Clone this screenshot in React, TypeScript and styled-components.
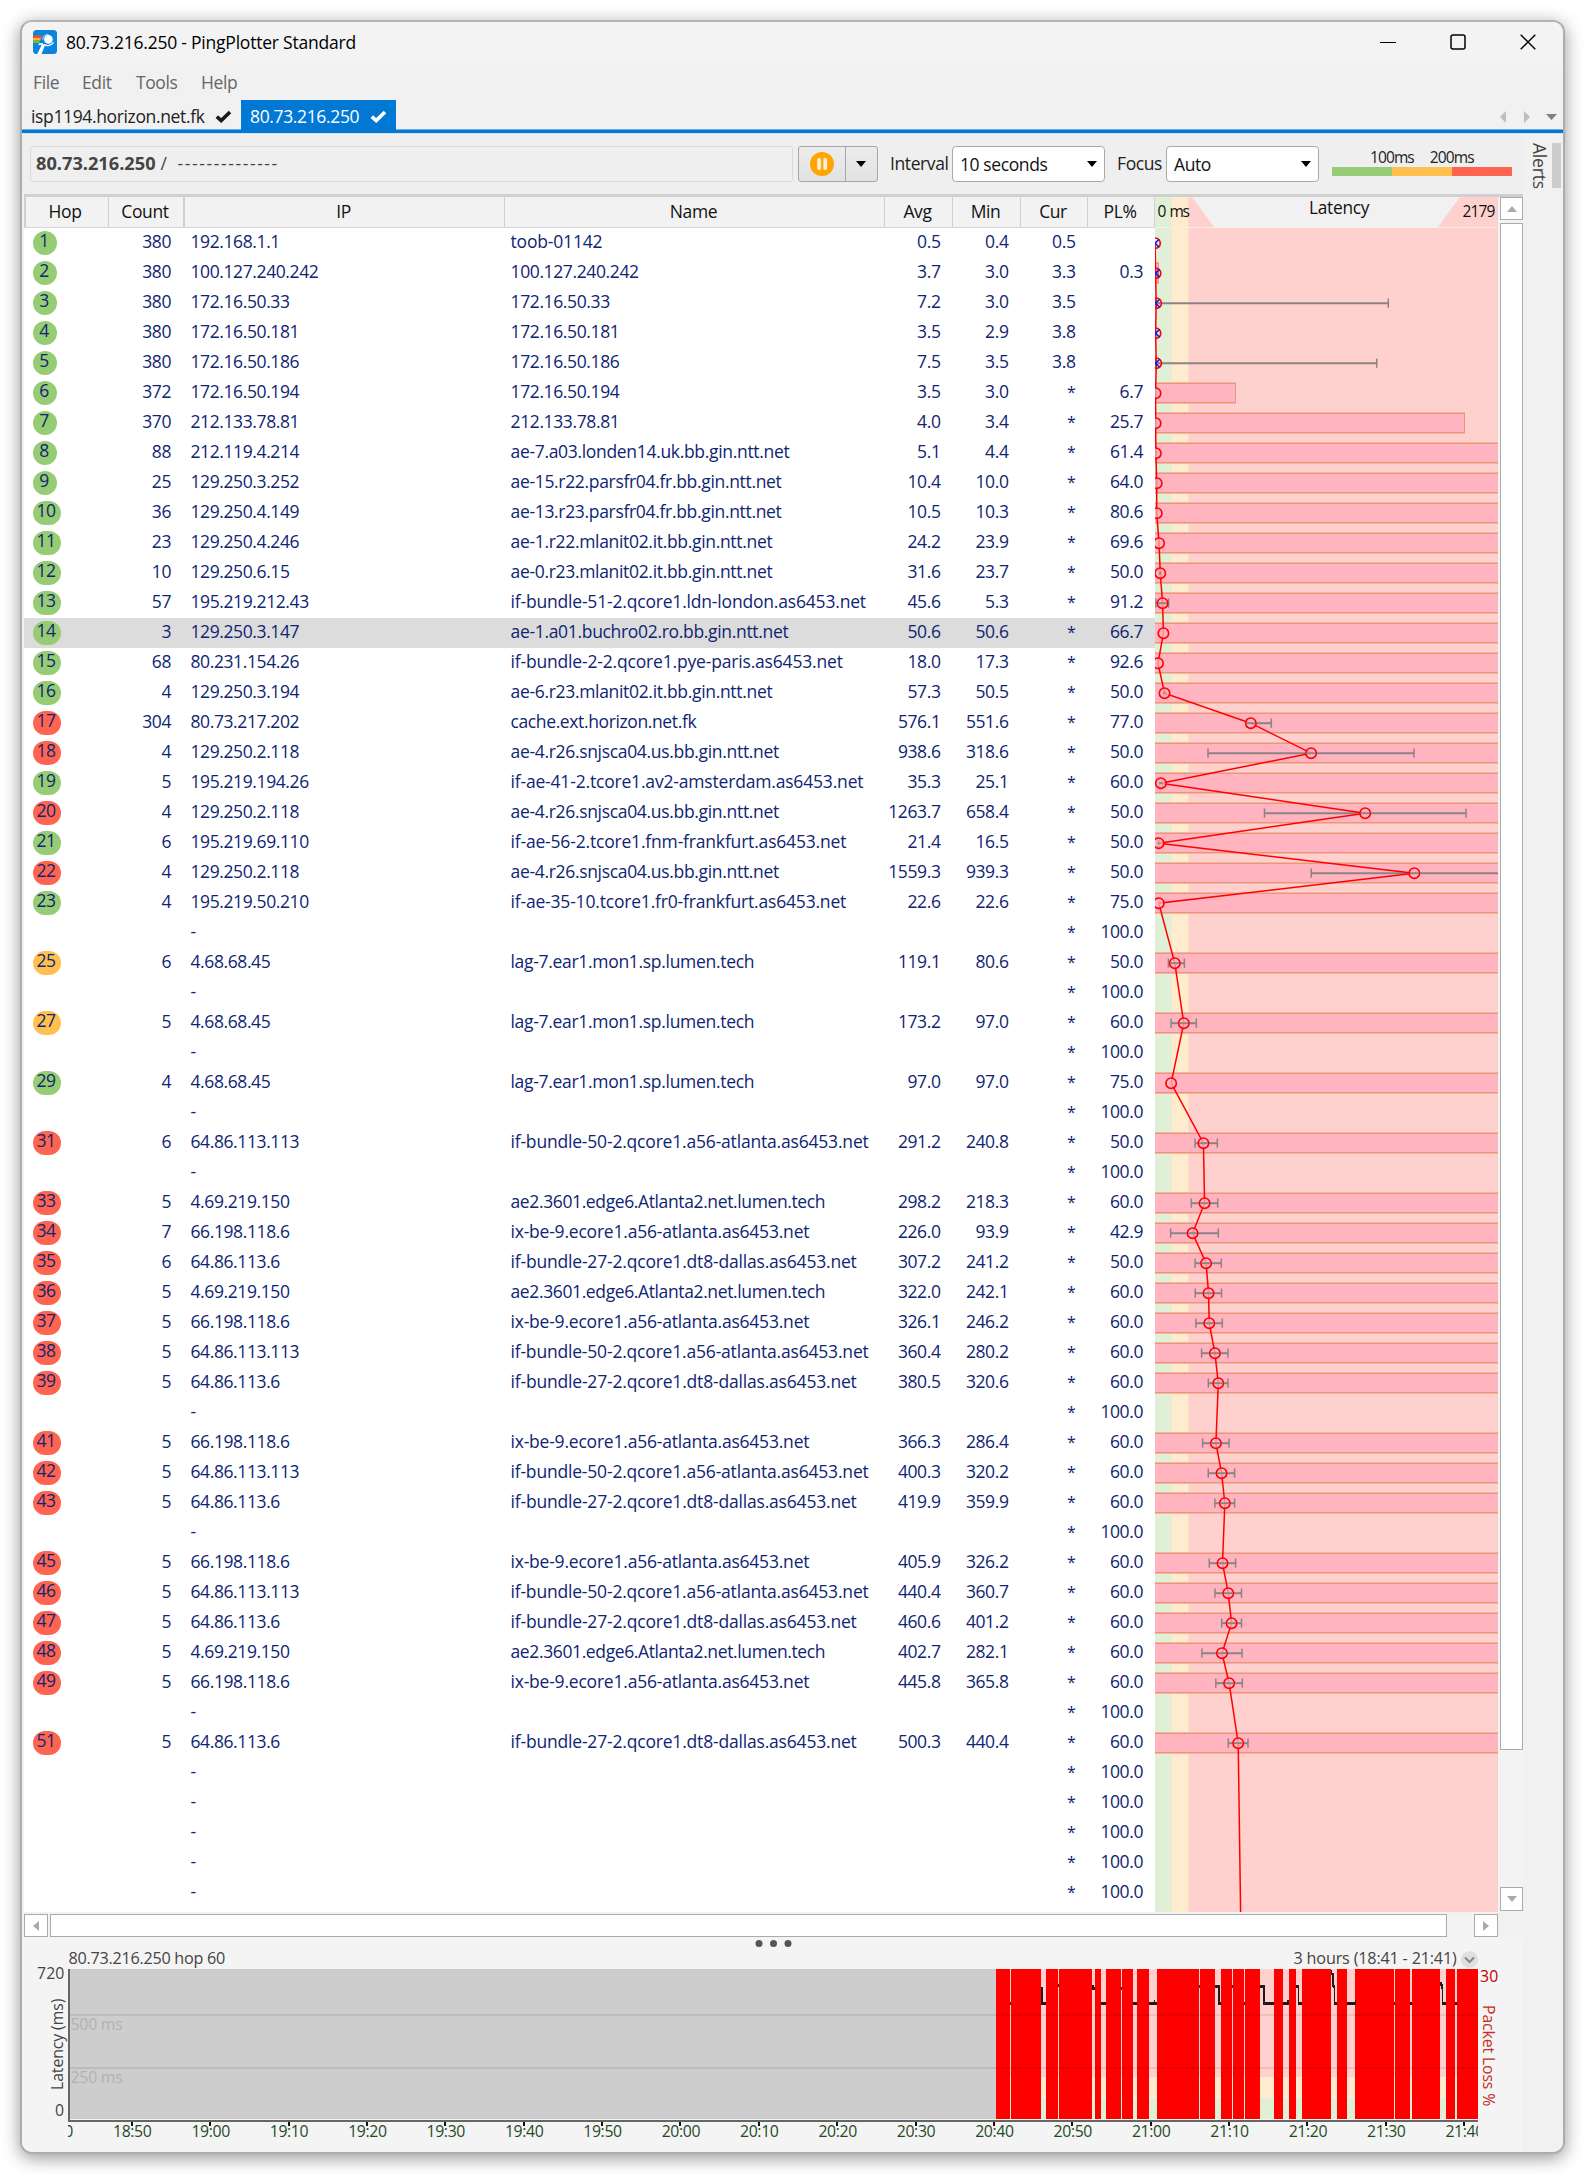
import React from "react";
import styled, { createGlobalStyle, css } from "styled-components";

const GlobalStyle = createGlobalStyle`
  * { box-sizing: border-box; }
  html, body { margin: 0; padding: 0; background: #fff; }
  body {
    font-family: "Open Sans", "Noto Sans", sans-serif;
    font-size: 17.5px;
    letter-spacing: -0.4px;
    color: #111;
  }
`;

/* ---------- data ---------- */

type Hop = {
  hop: number;
  count?: number;
  ip?: string;
  name?: string;
  avg?: number;
  min?: number;
  cur?: string;
  pl?: number;
  /** right end of the min/max whisker, in chart pixels */
  maxX?: number;
};

const h = (
  hop: number, count: number, ip: string, name: string,
  avg: number, min: number, cur: string, pl?: number, maxX?: number,
): Hop => ({ hop, count, ip, name, avg, min, cur, pl, maxX });

const known: Hop[] = [
  h(1, 380, "192.168.1.1", "toob-01142", 0.5, 0.4, "0.5"),
  h(2, 380, "100.127.240.242", "100.127.240.242", 3.7, 3.0, "3.3", 0.3, 3),
  h(3, 380, "172.16.50.33", "172.16.50.33", 7.2, 3.0, "3.5", undefined, 233.3),
  h(4, 380, "172.16.50.181", "172.16.50.181", 3.5, 2.9, "3.8"),
  h(5, 380, "172.16.50.186", "172.16.50.186", 7.5, 3.5, "3.8", undefined, 221.7),
  h(6, 372, "172.16.50.194", "172.16.50.194", 3.5, 3.0, "*", 6.7, 1),
  h(7, 370, "212.133.78.81", "212.133.78.81", 4.0, 3.4, "*", 25.7, 1),
  h(8, 88, "212.119.4.214", "ae-7.a03.londen14.uk.bb.gin.ntt.net", 5.1, 4.4, "*", 61.4, 1.3),
  h(9, 25, "129.250.3.252", "ae-15.r22.parsfr04.fr.bb.gin.ntt.net", 10.4, 10.0, "*", 64.0, 2),
  h(10, 36, "129.250.4.149", "ae-13.r23.parsfr04.fr.bb.gin.ntt.net", 10.5, 10.3, "*", 80.6, 2),
  h(11, 23, "129.250.4.246", "ae-1.r22.mlanit02.it.bb.gin.ntt.net", 24.2, 23.9, "*", 69.6, 4.2),
  h(12, 10, "129.250.6.15", "ae-0.r23.mlanit02.it.bb.gin.ntt.net", 31.6, 23.7, "*", 50.0, 6.2),
  h(13, 57, "195.219.212.43", "if-bundle-51-2.qcore1.ldn-london.as6453.net", 45.6, 5.3, "*", 91.2, 13.6),
  h(14, 3, "129.250.3.147", "ae-1.a01.buchro02.ro.bb.gin.ntt.net", 50.6, 50.6, "*", 66.7),
  h(15, 68, "80.231.154.26", "if-bundle-2-2.qcore1.pye-paris.as6453.net", 18.0, 17.3, "*", 92.6, 3),
  h(16, 4, "129.250.3.194", "ae-6.r23.mlanit02.it.bb.gin.ntt.net", 57.3, 50.5, "*", 50.0, 10.5),
  h(17, 304, "80.73.217.202", "cache.ext.horizon.net.fk", 576.1, 551.6, "*", 77.0, 116.3),
  h(18, 4, "129.250.2.118", "ae-4.r26.snjsca04.us.bb.gin.ntt.net", 938.6, 318.6, "*", 50.0, 259),
  h(19, 5, "195.219.194.26", "if-ae-41-2.tcore1.av2-amsterdam.as6453.net", 35.3, 25.1, "*", 60.0, 7.3),
  h(20, 4, "129.250.2.118", "ae-4.r26.snjsca04.us.bb.gin.ntt.net", 1263.7, 658.4, "*", 50.0, 311),
  h(21, 6, "195.219.69.110", "if-ae-56-2.tcore1.fnm-frankfurt.as6453.net", 21.4, 16.5, "*", 50.0, 4.4),
  h(22, 4, "129.250.2.118", "ae-4.r26.snjsca04.us.bb.gin.ntt.net", 1559.3, 939.3, "*", 50.0, 362),
  h(23, 4, "195.219.50.210", "if-ae-35-10.tcore1.fr0-frankfurt.as6453.net", 22.6, 22.6, "*", 75.0),
  h(25, 6, "4.68.68.45", "lag-7.ear1.mon1.sp.lumen.tech", 119.1, 80.6, "*", 50.0, 29.4),
  h(27, 5, "4.68.68.45", "lag-7.ear1.mon1.sp.lumen.tech", 173.2, 97.0, "*", 60.0, 41.3),
  h(29, 4, "4.68.68.45", "lag-7.ear1.mon1.sp.lumen.tech", 97.0, 97.0, "*", 75.0),
  h(31, 6, "64.86.113.113", "if-bundle-50-2.qcore1.a56-atlanta.as6453.net", 291.2, 240.8, "*", 50.0, 62.3),
  h(33, 5, "4.69.219.150", "ae2.3601.edge6.Atlanta2.net.lumen.tech", 298.2, 218.3, "*", 60.0, 62.7),
  h(34, 7, "66.198.118.6", "ix-be-9.ecore1.a56-atlanta.as6453.net", 226.0, 93.9, "*", 42.9, 63.3),
  h(35, 6, "64.86.113.6", "if-bundle-27-2.qcore1.dt8-dallas.as6453.net", 307.2, 241.2, "*", 50.0, 66.3),
  h(36, 5, "4.69.219.150", "ae2.3601.edge6.Atlanta2.net.lumen.tech", 322.0, 242.1, "*", 60.0, 66.5),
  h(37, 5, "66.198.118.6", "ix-be-9.ecore1.a56-atlanta.as6453.net", 326.1, 246.2, "*", 60.0, 67.3),
  h(38, 5, "64.86.113.113", "if-bundle-50-2.qcore1.a56-atlanta.as6453.net", 360.4, 280.2, "*", 60.0, 73),
  h(39, 5, "64.86.113.6", "if-bundle-27-2.qcore1.dt8-dallas.as6453.net", 380.5, 320.6, "*", 60.0, 73),
  h(41, 5, "66.198.118.6", "ix-be-9.ecore1.a56-atlanta.as6453.net", 366.3, 286.4, "*", 60.0, 74),
  h(42, 5, "64.86.113.113", "if-bundle-50-2.qcore1.a56-atlanta.as6453.net", 400.3, 320.2, "*", 60.0, 79.6),
  h(43, 5, "64.86.113.6", "if-bundle-27-2.qcore1.dt8-dallas.as6453.net", 419.9, 359.9, "*", 60.0, 79.6),
  h(45, 5, "66.198.118.6", "ix-be-9.ecore1.a56-atlanta.as6453.net", 405.9, 326.2, "*", 60.0, 80.6),
  h(46, 5, "64.86.113.113", "if-bundle-50-2.qcore1.a56-atlanta.as6453.net", 440.4, 360.7, "*", 60.0, 86.5),
  h(47, 5, "64.86.113.6", "if-bundle-27-2.qcore1.dt8-dallas.as6453.net", 460.6, 401.2, "*", 60.0, 86.5),
  h(48, 5, "4.69.219.150", "ae2.3601.edge6.Atlanta2.net.lumen.tech", 402.7, 282.1, "*", 60.0, 87),
  h(49, 5, "66.198.118.6", "ix-be-9.ecore1.a56-atlanta.as6453.net", 445.8, 365.8, "*", 60.0, 87.3),
  h(51, 5, "64.86.113.6", "if-bundle-27-2.qcore1.dt8-dallas.as6453.net", 500.3, 440.4, "*", 60.0, 93),
];

const ROW_COUNT = 56;
const rows: Hop[] = Array.from({ length: ROW_COUNT }, (_, i) =>
  known.find((k) => k.hop === i + 1) ?? { hop: i + 1, ip: "-", cur: "*", pl: 100 },
);

const SELECTED_HOP = 14;

const badgeColor = (avg: number) =>
  avg < 100 ? "#96cc73" : avg < 200 ? "#ffc04f" : "#ff6450";

/* hyphenated host names are tracked a little wider */
const nameTracking = (name = "") => {
  const hyphens = name.split("-").length - 1;
  return -0.38 + (hyphens * 2.1) / Math.max(name.length, 1);
};

/* ---------- window frame ---------- */

const Page = styled.div`
  width: 1585px;
  height: 2175px;
  padding: 20px;
  overflow: hidden;
`;

const Window = styled.div`
  width: 1545px;
  height: 2134px;
  border: 2px solid #acacac;
  border-top-color: #b4b4b4;
  border-radius: 12px;
  background: #f1f1f1;
  box-shadow: 0 4px 18px rgba(0, 0, 0, 0.42);
  overflow: hidden;
  display: flex;
  flex-direction: column;
`;

const TitleBar = styled.header`
  height: 43px;
  flex: none;
  background: #f3f3f3;
  display: flex;
  align-items: center;
  padding: 0 27px 3px 11px;
`;

const Title = styled.h1`
  margin: 0 auto 0 9px;
  font-size: 17.5px;
  font-weight: 400;
  letter-spacing: -0.22px;
  color: #000;
`;

const WindowButtons = styled.div`
  display: flex;
  gap: 54px;
`;

const MenuBar = styled.nav`
  height: 35px;
  flex: none;
  display: flex;
  align-items: center;
  padding: 0 0 1px 11px;
  color: #666;
`;

const MenuItem = styled.span<{ $w: number }>`
  width: ${(p) => p.$w}px;
`;

const TabStrip = styled.div`
  height: 34px;
  flex: none;
  display: flex;
  align-items: stretch;
  border-bottom: 1px solid #d5e2ee;
  box-shadow: inset 0 -3px 0 #0078d4, inset 0 -4px 0 #66aee5;
`;

const Tab = styled.div<{ $active?: boolean }>`
  display: flex;
  align-items: center;
  justify-content: space-between;
  width: ${(p) => (p.$active ? 155 : 219)}px;
  padding: 0 9px 1px 9px;
  ${(p) =>
    p.$active
      ? css`
          background: #0078d4;
          color: #fff;
        `
      : css`
          color: #222;
        `}
`;

const TabText = styled.span`
  letter-spacing: -0.36px;
`;

const TabArrows = styled.div`
  margin-left: auto;
  padding-right: 6px;
  display: flex;
  align-items: center;
`;

const Body = styled.div`
  flex: 1;
  display: flex;
  min-height: 0;
`;

const Main = styled.div`
  width: 1501px;
  display: flex;
  flex-direction: column;
`;

const SideStrip = styled.aside`
  flex: 1;
  background: #f1f1f1;
  padding: 9px 2px 0 6px;
  display: flex;
  justify-content: space-between;
  align-items: flex-start;
`;

const SideLabel = styled.span`
  writing-mode: vertical-rl;
  line-height: 22px;
  height: 46px;
  letter-spacing: -0.2px;
  color: #444;
`;

const SideHandle = styled.span`
  width: 9px;
  height: 45px;
  background: #cdcdcd;
`;

/* ---------- toolbar ---------- */

const Toolbar = styled.div`
  height: 60px;
  flex: none;
  background: #efefef;
  display: flex;
  align-items: center;
  padding: 0 0 0 8px;
  color: #222;
`;

const Address = styled.div`
  width: 763px;
  height: 36px;
  border: 1px solid #dadada;
  border-radius: 3px;
  display: flex;
  align-items: center;
  padding: 0 0 3px 5px;
  color: #444;
`;

const AddressHost = styled.b`
  font-size: 18.2px;
  letter-spacing: 0;
  margin-right: 5px;
`;

const AddressDashes = styled.span`
  margin-left: 11px;
  letter-spacing: 1.6px;
`;

const SplitButton = styled.div`
  margin-left: 5px;
  width: 80px;
  height: 36px;
  border: 1.5px solid #a6a6a6;
  border-radius: 3px;
  background: linear-gradient(#ececec, #e2e2e2);
  display: flex;
`;

const SplitPart = styled.span<{ $w: number }>`
  width: ${(p) => p.$w}px;
  display: flex;
  align-items: center;
  justify-content: center;
  & + & {
    border-left: 1px solid #a6a6a6;
  }
`;

const FieldLabel = styled.label<{ $left: number; $w: number }>`
  margin-left: ${(p) => p.$left}px;
  width: ${(p) => p.$w}px;
  padding-bottom: 3px;
  white-space: nowrap;
`;

const Select = styled.div`
  width: 153px;
  height: 36px;
  border: 1px solid #a9a9a9;
  border-radius: 4px;
  background: #fff;
  display: flex;
  align-items: center;
  justify-content: space-between;
  padding: 0 7px 0 7px;
  color: #111;
`;

const Legend = styled.div`
  margin-left: 13px;
  width: 180px;
  padding-bottom: 4px;
`;

const LegendLabels = styled.div`
  display: flex;
  gap: 16px;
  padding-left: 38px;
  font-size: 15.5px;
  letter-spacing: -0.9px;
  line-height: 19px;
`;

const LegendBar = styled.div`
  height: 9px;
  display: flex;
`;

const LegendZone = styled.span<{ $c: string }>`
  flex: 1;
  background: ${(p) => p.$c};
`;

/* ---------- trace table ---------- */

const TraceArea = styled.section`
  height: 1718px;
  flex: none;
  border-top: 3px solid #d0d0d0;
  margin-left: 2px;
  display: flex;
  background: #f4f4f4;
`;

const Table = styled.div`
  width: 1131px;
  display: flex;
  flex-direction: column;
  background: #fff;
`;

const COLS = "85px 76px 320px 380px 68px 68px 67px 67px";

const HeadRow = styled.div`
  display: grid;
  grid-template-columns: ${COLS};
  height: 31px;
  background: #f2f2f2;
  border-bottom: 1px solid #d6d6d6;
  border-left: 2px solid #d0d0d0;
  margin-right: -1px;
`;

const HeadCell = styled.div<{ $thick?: boolean }>`
  display: flex;
  justify-content: center;
  align-items: center;
  padding: 0 2px 3px 0;
  margin-left: -2px;
  margin-right: 2px;
  border-right: ${(p) => (p.$thick ? 2 : 1)}px solid #d0d0d0;
  color: #111;
`;

const Row = styled.div<{ $selected: boolean }>`
  display: grid;
  grid-template-columns: ${COLS};
  height: 30px;
  line-height: 27px;
  color: #0f2573;
  background: ${(p) => (p.$selected ? "#dcdcdc" : "transparent")};
`;

const Cell = styled.div<{ $right?: number; $left?: number; $tracking?: number }>`
  white-space: nowrap;
  letter-spacing: ${(p) => (p.$tracking ?? -0.4).toFixed(3)}px;
  ${(p) =>
    p.$right !== undefined
      ? `text-align: right; padding-right: ${p.$right}px;`
      : `padding-left: ${p.$left ?? 0}px;`}
`;

const Star = styled.span`
  font-size: 16px;
`;

const Badge = styled.div<{ $c: string; $wide: boolean }>`
  margin: 3px 0 0 8.5px;
  width: ${(p) => (p.$wide ? 28 : 24)}px;
  height: 24px;
  border-radius: 12px;
  background: ${(p) => p.$c};
  text-align: center;
  line-height: 19px;
  padding-right: 1px;
`;

/* ---------- scroll bars ---------- */

const VScroll = styled.div`
  width: 23px;
  margin-left: 2px;
  display: flex;
  flex-direction: column;
  background: #f3f3f3;
`;

const HScroll = styled.div`
  height: 23px;
  flex: none;
  margin: 2px 25px 0 2px;
  display: flex;
  background: #f3f3f3;
`;

const ScrollBox = styled.div<{ $w: number; $h: number }>`
  width: ${(p) => p.$w}px;
  height: ${(p) => p.$h}px;
  border: 1.5px solid #ababab;
  background: #fff;
  display: flex;
  align-items: center;
  justify-content: center;
`;

const VGap = styled.div<{ $h: number }>`
  height: ${(p) => p.$h}px;
`;
const HGap = styled.div<{ $w: number }>`
  width: ${(p) => p.$w}px;
`;

const TimelinePanel = styled.section`
  flex: 1;
  background: #f4f4f4;
  svg {
    display: block;
  }
`;

/* ---------- glyphs ---------- */

type Dir = "up" | "down" | "left" | "right";
const Triangle = ({ dir, color, w = 10, t = 6 }: { dir: Dir; color: string; w?: number; t?: number }) => {
  const pts = {
    down: `0,0 ${w},0 ${w / 2},${t}`,
    up: `0,${t} ${w},${t} ${w / 2},0`,
    left: `${t},0 ${t},${w} 0,${w / 2}`,
    right: `0,0 0,${w} ${t},${w / 2}`,
  }[dir];
  const flat = dir === "up" || dir === "down";
  return (
    <svg width={flat ? w : t} height={flat ? t : w}>
      <polygon points={pts} fill={color} />
    </svg>
  );
};

const Check = ({ color }: { color: string }) => (
  <svg width="17" height="13" viewBox="0 0 17 13">
    <path d="M1.8 6.6 6.2 10.6 15 2" fill="none" stroke={color} strokeWidth="3.6" />
  </svg>
);

const AppLogo = () => (
  <svg width="24" height="24" viewBox="0 0 24 24">
    <rect width="24" height="24" rx="3.5" fill="#0b84dd" />
    <path d="M0 5.4H9.2L8 8H0z" fill="#f0502b" />
    <path d="M0 8H8L7 10.4H0z" fill="#fcb827" />
    <path d="M0 10.4H7L6.2 13H0z" fill="#6cbe3a" />
    <circle cx="15.4" cy="9.4" r="4.3" fill="#fff" />
    <path d="M9.8 9.6C9.8 6.4 12 4.6 15.4 4.6" fill="none" stroke="#fff" strokeWidth="0.8" />
    <path d="M11 14.2C12.6 16 17.6 16.6 20.6 12.4" fill="none" stroke="#fff" strokeWidth="1.3" />
    <path d="M4.2 24C6 20.4 7.8 17 9.2 13.8L12 15.4C10.6 18.4 9.4 21.2 8.4 24z" fill="#fff" />
    <path d="M5.6 14.4 10 13.8" stroke="#fff" strokeWidth="1.6" />
  </svg>
);

const PauseIcon = () => (
  <svg width="24" height="24" viewBox="0 0 24 24">
    <circle cx="12" cy="12" r="12" fill="#ffa400" />
    <rect x="7.3" y="6" width="3.6" height="12" rx="1.8" fill="#fff3d9" stroke="#f3d9a0" strokeWidth=".5" />
    <rect x="13.4" y="6" width="3.6" height="12" rx="1.8" fill="#fff3d9" stroke="#f3d9a0" strokeWidth=".5" />
  </svg>
);

/* ---------- latency graph ---------- */

const PX_PER_MS = 0.1663;
const PX_PER_LOSS = 12.05;
const CHART_W = 343;
const CHART_H = 1715;
const HEAD_H = 31;

const LossBar = ({ loss, mid }: { loss: number; mid: number }) => {
  const w = Math.round(Math.min(loss * PX_PER_LOSS, 400));
  return (
    <g>
      <rect x="-3" y={mid - 11} width={w + 3} height="22" fill="#f7b3a1" />
      <rect x="-3" y={mid - 10} width={w + 3} height="20" fill="#e9967a" />
      <rect x="-3" y={mid - 9} width={w + 2} height="18" fill="#ffb4c0" />
    </g>
  );
};

const LatencyGraph = () => {
  const mid = (hop: number) => HEAD_H + (hop - 1) * 30 + 15;
  const cy = (hop: number) => mid(hop) + 0.2;
  const x = (ms: number) => ms * PX_PER_MS;
  const points = known.map((k) => `${x(k.avg!)},${cy(k.hop)}`);
  points.push(`85.6,${CHART_H}`);
  return (
    <svg width={CHART_W} height={CHART_H} style={{ display: "block" }}>
      <rect width={CHART_W} height={CHART_H} fill="#ffd1ce" />
      <rect width="16.5" height={CHART_H} fill="#dff0d6" />
      <rect x="16.5" width="17" height={CHART_H} fill="#ffebcd" />
      <polygon points="37,0 305,0 283,30 59,30" fill="#f1f1f1" />
      <rect y="30" width={CHART_W} height="1" fill="#f8eeea" />
      <rect x={CHART_W - 1} width="1" height={CHART_H} fill="#eed2cd" />
      <g fontSize="15.5" fill="#111">
        <text x="2.5" y="20" textLength="32" wordSpacing="2">0 ms</text>
        <text x="307.5" y="20" textLength="32.5">2179</text>
        <text x="154" y="16.5" fontSize="17.3" textLength="60">Latency</text>
      </g>
      {rows.map((r) => (r.pl && r.pl < 100 ? <LossBar key={r.hop} loss={r.pl} mid={mid(r.hop)} /> : null))}
      {known.map((k) =>
        k.maxX ? (
          <g key={k.hop} stroke="#8c8484" strokeWidth="1.5">
            <path d={`M${x(k.min!)} ${cy(k.hop)}H${k.maxX}`} strokeWidth="2" />
            <path d={`M${x(k.min!)} ${cy(k.hop) - 4.6}v9.2M${k.maxX} ${cy(k.hop) - 4.6}v9.2`} />
          </g>
        ) : null,
      )}
      <polyline points={points.join(" ")} fill="none" stroke="#ff0000" strokeWidth="1.5" />
      {known.map((k) => (
        <circle key={k.hop} cx={x(k.avg!)} cy={cy(k.hop)} r="5.2" fill={k.cur === "*" ? "#ffb4c0" : "none"} fillOpacity=".75" stroke="#ff0000" strokeWidth="1.6" />
      ))}
      {known.map((k) =>
        k.maxX ? <path key={k.hop} d={`M${Math.max(x(k.min!), x(k.avg!) - 4.4)} ${cy(k.hop)}H${Math.min(k.maxX, x(k.avg!) + 4.4)}`} stroke="#8c8484" strokeWidth="1.8" /> : null,
      )}
      {known.slice(0, 5).map((k) => (
        <path
          key={k.hop}
          d={`M${x(Number(k.cur)) - 4} ${cy(k.hop) - 4}l8 8m0 -8l-8 8`}
          stroke="#1414ff"
          strokeWidth="1.5"
        />
      ))}
    </svg>
  );
};

/* ---------- timeline graph ---------- */

const LOSS_START = 974;
const LOSS_END = 1456;
/* [start, end] of every stretch without packet loss, in panel pixels */
const gaps: [number, number][] = [
  [988, 989], [1019, 1024], [1036, 1037], [1070, 1073], [1079, 1084], [1099, 1100], [1111, 1115],
  [1127, 1135], [1177, 1178], [1193, 1199], [1210, 1211], [1222, 1223], [1238, 1252], [1261, 1267],
  [1274, 1280], [1309, 1315], [1325, 1333], [1372, 1373], [1388, 1390], [1418, 1424], [1433, 1435],
];

/* latency trace pieces: x, y, width, height */
const trace: [number, number, number, number][] = [
  [988, 65, 1, 3], [1019, 50, 2, 18], [1021, 65, 3, 3], [1036, 47, 1, 3], [1070, 48, 2, 5], [1072, 50, 1, 3],
  [1079, 65, 5, 3], [1099, 50, 1, 3], [1111, 65, 4, 3], [1127, 65, 8, 3], [1132, 63, 1, 2], [1177, 48, 1, 3],
  [1193, 48, 5, 3], [1196, 48, 2, 20], [1196, 65, 3, 3], [1210, 48, 1, 3], [1222, 65, 1, 3],
  [1238, 48, 5, 3], [1241, 48, 2, 20], [1241, 65, 11, 3], [1261, 65, 6, 3], [1265, 63, 2, 3],
  [1274, 48, 3, 3], [1276, 48, 1, 20], [1276, 65, 4, 3],
  [1309, 33, 1, 5], [1310, 36, 2, 14], [1311, 48, 2, 3], [1312, 48, 1, 20], [1312, 65, 3, 3],
  [1325, 65, 8, 3], [1333, 63, 1, 5], [1372, 65, 1, 3], [1388, 65, 2, 3],
  [1418, 45, 2, 4], [1419, 47, 2, 5], [1420, 49, 1, 19], [1420, 65, 4, 3], [1433, 65, 2, 3],
];

const times = [
  "18:50", "19:00", "19:10", "19:20", "19:30", "19:40", "19:50", "20:00", "20:10",
  "20:20", "20:30", "20:40", "20:50", "21:00", "21:10", "21:20", "21:30", "21:40",
];

const TimelineGraph = () => {
  const tickX = (i: number) => 109.8 + i * 78.38;
  return (
    <svg width="1501" height="216" letterSpacing="-0.3">
      <defs>
        <clipPath id="axisClip">
          <rect x="46" y="180" width="1410" height="36" />
        </clipPath>
      </defs>
      {[737, 751.5, 766].map((cx) => (
        <circle key={cx} cx={cx} cy="6.5" r="3.5" fill="#555" />
      ))}
      <g fontSize="16.2" fill="#444">
        <text x="46.5" y="27" textLength="156.5">80.73.216.250 hop 60</text>
        <text x="1271.5" y="27" textLength="163">3 hours (18:41 - 21:41)</text>
        <text x="15" y="41.5" textLength="27" fontSize="15.8">720</text>
        <text x="33" y="179" textLength="9" fontSize="15.8">0</text>
        <text transform="translate(40.5 153) rotate(-90)" textLength="91" fontSize="15.8">Latency (ms)</text>
      </g>
      <circle cx="1447.5" cy="22.5" r="8.6" fill="#dfdfdf" />
      <path d="M1443 20.5l4.5 4.5 4.5-4.5" fill="none" stroke="#8b8b8b" strokeWidth="2.2" />

      <rect x="48" y="32" width={LOSS_START - 48} height="150" fill="#cdcdcd" />
      <rect x={LOSS_START} y="32" width={LOSS_END - LOSS_START} height="150" fill="#ff0000" />
      {gaps.map(([a, b]) => (
        <g key={a}>
          <rect x={a} y="32" width={b - a} height="108" fill="#ffd1ce" />
          <rect x={a} y="140" width={b - a} height="21" fill="#ffebcd" />
          <rect x={a} y="161" width={b - a} height="21" fill="#dff0d6" />
        </g>
      ))}
      {trace.map(([x, y, w, hh], i) => (
        <rect key={i} x={x} y={y} width={w} height={hh} fill="#1c1c1c" />
      ))}
      <rect x="48" y="77" width={LOSS_END - 48} height="2" fill="#000" fillOpacity=".08" />
      <rect x="48" y="130" width={LOSS_END - 48} height="2" fill="#000" fillOpacity=".08" />
      <g fontSize="15.8" fill="#b2b2b2">
        <text x="48.5" y="93" textLength="52">500 ms</text>
        <text x="48.5" y="146" textLength="52">250 ms</text>
      </g>
      <rect x="46" y="32" width="2" height="152" fill="#666" />
      <rect x="46" y="183" width="1410" height="2" fill="#666" />

      <g clipPath="url(#axisClip)" fontSize="15.8" fill="#1f4a1f">
        {times.map((t, i) => (
          <g key={t}>
            <rect x={Math.round(tickX(i)) - 1} y="185" width="2" height="4" fill="#111" />
            <text x={tickX(i) - 18.8} y="199.5" textLength="38.5">{t}</text>
          </g>
        ))}
        <text x="12.6" y="199.5" textLength="38.5">18:40</text>
      </g>
      <g fontSize="15.8" fill="#c00000">
        <text x="1458" y="45" textLength="18">30</text>
        <text transform="translate(1461 68) rotate(90)" textLength="101" fill="#c42c24">Packet Loss %</text>
      </g>
    </svg>
  );
};

/* ---------- app ---------- */

const headers = ["Hop", "Count", "IP", "Name", "Avg", "Min", "Cur", "PL%"];

export default function App() {
  return (
    <Page>
      <GlobalStyle />
      <Window>
        <TitleBar>
          <AppLogo />
          <Title>80.73.216.250 - PingPlotter Standard</Title>
          <WindowButtons>
            <svg width="16" height="16"><path d="M0 8.5h16" stroke="#000" strokeWidth="1.2" /></svg>
            <svg width="16" height="16"><rect x="1" y="1" width="14" height="14" rx="2" fill="none" stroke="#000" strokeWidth="1.5" /></svg>
            <svg width="16" height="16"><path d="M.7.7l14.6 14.6M15.3.7.7 15.3" stroke="#000" strokeWidth="1.4" /></svg>
          </WindowButtons>
        </TitleBar>
        <MenuBar>
          <MenuItem $w={49}>File</MenuItem>
          <MenuItem $w={54}>Edit</MenuItem>
          <MenuItem $w={65}>Tools</MenuItem>
          <MenuItem $w={60}>Help</MenuItem>
        </MenuBar>
        <TabStrip>
          <Tab>
            <TabText>isp1194.horizon.net.fk</TabText>
            <Check color="#1a1a1a" />
          </Tab>
          <Tab $active>
            <TabText>80.73.216.250</TabText>
            <Check color="#fff" />
          </Tab>
          <TabArrows>
            <Triangle dir="left" color="#bdbdbd" w={12} t={6} />
            <HGap $w={18} />
            <Triangle dir="right" color="#bdbdbd" w={12} t={6} />
            <HGap $w={16} />
            <Triangle dir="down" color="#808080" w={11} t={6} />
          </TabArrows>
        </TabStrip>
        <Body>
          <Main>
            <Toolbar>
              <Address>
                <AddressHost>80.73.216.250</AddressHost>
                <span>/</span>
                <AddressDashes>--------------</AddressDashes>
              </Address>
              <SplitButton>
                <SplitPart $w={46}><PauseIcon /></SplitPart>
                <SplitPart $w={31}><Triangle dir="down" color="#000" /></SplitPart>
              </SplitButton>
              <FieldLabel $left={12} $w={62}>Interval</FieldLabel>
              <Select>
                10 seconds
                <Triangle dir="down" color="#000" />
              </Select>
              <FieldLabel $left={12} $w={49}>Focus</FieldLabel>
              <Select>
                Auto
                <Triangle dir="down" color="#000" />
              </Select>
              <Legend>
                <LegendLabels>
                  <span>100ms</span>
                  <span>200ms</span>
                </LegendLabels>
                <LegendBar>
                  <LegendZone $c="#96cc73" />
                  <LegendZone $c="#ffc04f" />
                  <LegendZone $c="#ff6450" />
                </LegendBar>
              </Legend>
            </Toolbar>
            <TraceArea>
              <Table>
                <HeadRow>
                  {headers.map((t) => (
                    <HeadCell key={t} $thick={t === "Count"}>{t}</HeadCell>
                  ))}
                </HeadRow>
                {rows.map((r) => (
                  <Row key={r.hop} $selected={r.hop === SELECTED_HOP}>
                    <Cell>
                      {r.avg !== undefined && (
                        <Badge $c={badgeColor(r.avg)} $wide={r.hop > 9}>{r.hop}</Badge>
                      )}
                    </Cell>
                    <Cell $right={14}>{r.count}</Cell>
                    <Cell $left={5.5}>{r.ip}</Cell>
                    <Cell $left={5.5} $tracking={nameTracking(r.name)}>{r.name}</Cell>
                    <Cell $right={12.5}>{r.avg?.toFixed(1)}</Cell>
                    <Cell $right={12.5}>{r.min?.toFixed(1)}</Cell>
                    <Cell $right={12.5}>{r.cur === "*" ? <Star>*</Star> : r.cur}</Cell>
                    <Cell $right={12}>{r.pl?.toFixed(1)}</Cell>
                  </Row>
                ))}
              </Table>
              <LatencyGraph />
              <VScroll>
                <ScrollBox $w={23} $h={23}><Triangle dir="up" color="#aaa" /></ScrollBox>
                <VGap $h={3} />
                <ScrollBox $w={23} $h={1527} />
                <VGap $h={137} />
                <ScrollBox $w={23} $h={24}><Triangle dir="down" color="#aaa" /></ScrollBox>
              </VScroll>
            </TraceArea>
            <HScroll>
              <ScrollBox $w={24} $h={23}><Triangle dir="left" color="#aaa" /></ScrollBox>
              <HGap $w={2} />
              <ScrollBox $w={1397} $h={23} />
              <HGap $w={27} />
              <ScrollBox $w={24} $h={23}><Triangle dir="right" color="#aaa" /></ScrollBox>
            </HScroll>
            <TimelinePanel>
              <TimelineGraph />
            </TimelinePanel>
          </Main>
          <SideStrip>
            <SideLabel>Alerts</SideLabel>
            <SideHandle />
          </SideStrip>
        </Body>
      </Window>
    </Page>
  );
}
